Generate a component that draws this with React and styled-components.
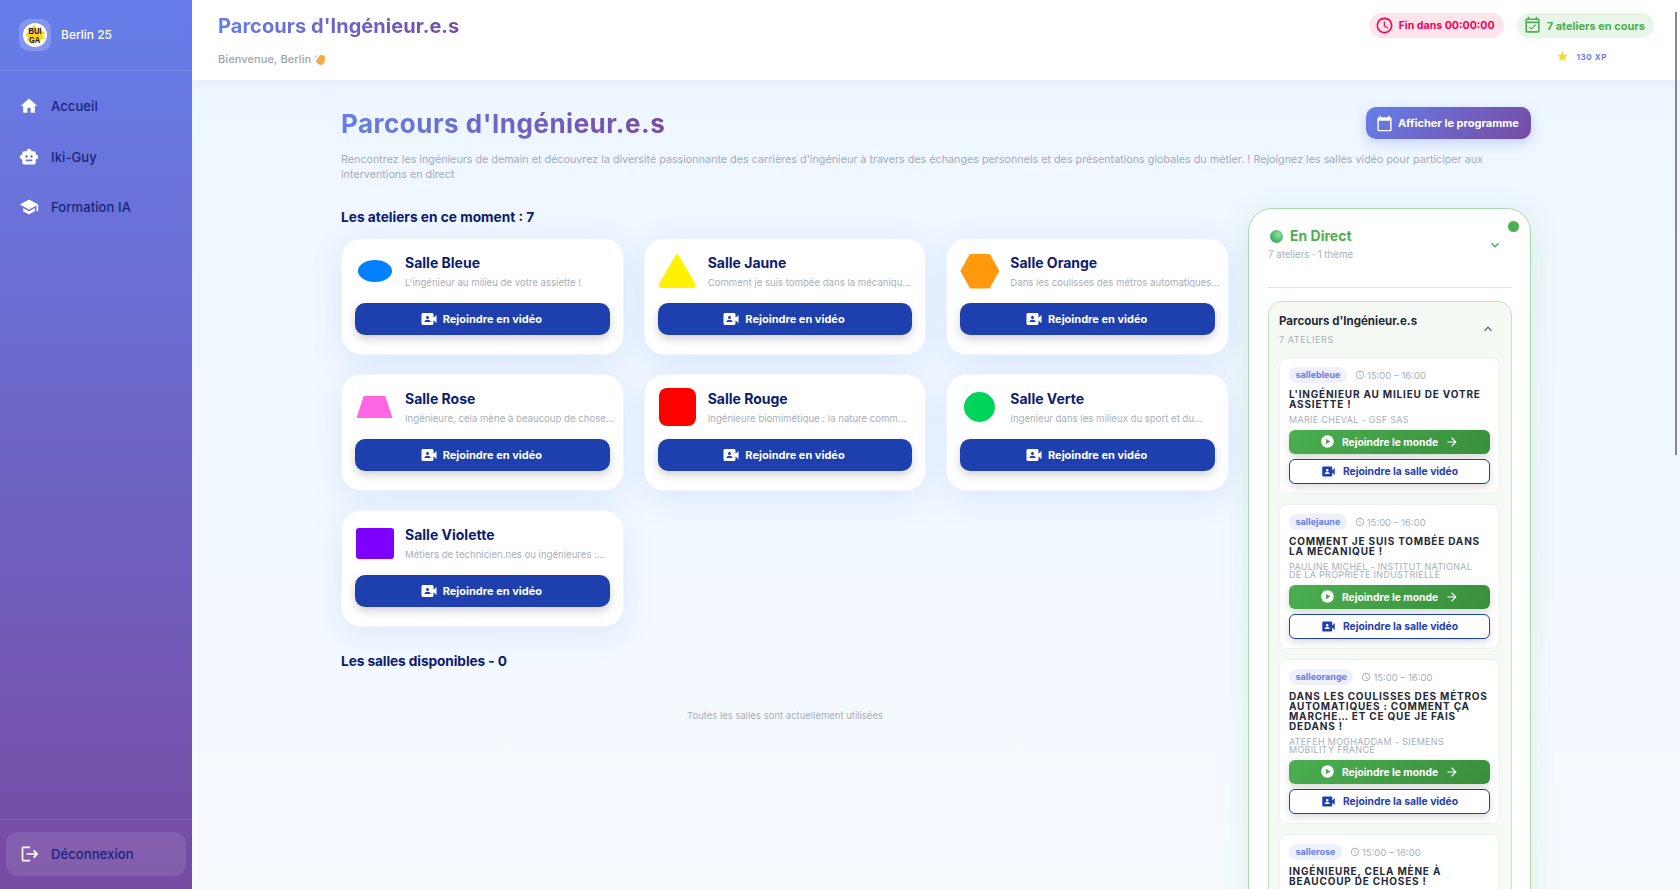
import styled, { createGlobalStyle } from 'styled-components';
import {
  MdHome,
  MdSmartToy,
  MdSchool,
  MdLogout,
  MdAccessTime,
  MdOutlineEventAvailable,
  MdStar,
  MdCalendarToday,
  MdVideoCameraFront,
  MdPlayCircle,
  MdArrowForward,
  MdExpandMore,
  MdExpandLess,
} from 'react-icons/md';

const GlobalStyle = createGlobalStyle`
  html, body {
    margin: 0;
    height: 100%;
    overflow: hidden;
  }
  body {
    font-family: Inter, "Liberation Sans", sans-serif;
    background: #f3f8ff;
  }
  * {
    box-sizing: border-box;
  }
`;

const ROOMS = [
  { name: 'Salle Bleue', desc: "L'ingénieur au milieu de votre assiette !", shape: { w: 34, h: 22, color: '#0080ff', radius: '50%' } },
  { name: 'Salle Jaune', desc: 'Comment je suis tombée dans la mécaniqu...', shape: { w: 37, h: 34, color: '#fff200', clip: 'polygon(50% 0, 54% 3%, 100% 90%, 97% 100%, 3% 100%, 0 90%, 46% 3%)' } },
  { name: 'Salle Orange', desc: 'Dans les coulisses des métros automatiques...', shape: { w: 39, h: 35, color: '#ff9a0e', clip: 'polygon(25% 0, 75% 0, 100% 50%, 75% 100%, 25% 100%, 0 50%)' } },
  { name: 'Salle Rose', desc: 'Ingénieure, cela mène à beaucoup de chose...', shape: { w: 36, h: 22, color: '#ff66e6', clip: 'polygon(20% 0, 80% 0, 100% 100%, 0 100%)' } },
  { name: 'Salle Rouge', desc: 'Ingénieure biomimétique : la nature comm...', shape: { w: 37, h: 38, color: '#ff0000', radius: '8px' } },
  { name: 'Salle Verte', desc: 'Ingenieur dans les milieux du sport et du...', shape: { w: 31, h: 30, color: '#00d45a', radius: '50%' } },
  { name: 'Salle Violette', desc: 'Métiers de technicien.nes ou ingénieures :...', shape: { w: 38, h: 31, color: '#8000ff', radius: '3px' } },
];

const SESSIONS = [
  { room: 'sallebleue', title: "L'ingénieur au milieu de votre assiette !", speaker: 'Marie Cheval - GSF SAS' },
  { room: 'sallejaune', title: 'Comment je suis tombée dans la mécanique !', speaker: 'Pauline Michel - Institut National de la Propriété Industrielle' },
  { room: 'salleorange', title: 'Dans les coulisses des métros automatiques : comment ça marche… et ce que je fais dedans !', speaker: 'Atefeh Moghaddam - Siemens Mobility France' },
  { room: 'sallerose', title: 'Ingénieure, cela mène à beaucoup de choses !', speaker: '' },
];

const Logo = () => (
  <LogoTile>
    <svg width="24" height="24" viewBox="0 0 24 24">
      <circle cx="12" cy="12" r="12" fill="#fff" />
      <polygon
        points="12,3 14,6 18,4 18,8 22,9 20,12 22,16 18,16 17,20 13,18 10,21 8,18 4,18 5,14 2,12 5,9 4,5 8,6 10,3"
        fill="#ffd21f"
      />
      <text x="12" y="11" textAnchor="middle" fontSize="9.5" fontWeight="800" fill="#14143c" fontFamily="Liberation Sans, sans-serif" textLength="13" lengthAdjust="spacingAndGlyphs">BUI</text>
      <text x="11.5" y="20" textAnchor="middle" fontSize="9.5" fontWeight="800" fill="#14143c" fontFamily="Liberation Sans, sans-serif" textLength="11" lengthAdjust="spacingAndGlyphs">GA</text>
    </svg>
  </LogoTile>
);

const WaveHand = () => (
  <svg width="12" height="13" viewBox="0 0 12 13">
    <path d="M2.6 7 L6 2 Q7 1.4 7.4 2.4 L8.2 1.8 Q9.2 1.6 9.4 2.6 L10.2 3 Q11 3.4 10.8 4.4 Q11.8 7 10 10 Q7.8 12.8 5 11.6 Q3.2 10.6 2.2 8.4 Q2 7.4 2.6 7 Z" fill="#f6a94a" />
    <path d="M1 4 L2.6 2.2 M0.6 6.6 L1.4 5.8" stroke="#7fa8e0" strokeWidth="0.9" fill="none" />
  </svg>
);

const Sidebar = () => (
  <Side>
    <Brand>
      <Logo />
      <BrandName>Berlin 25</BrandName>
    </Brand>
    <Nav>
      <NavItem><MdHome size={20} /><NavLabel>Accueil</NavLabel></NavItem>
      <NavItem><MdSmartToy size={20} /><NavLabel>Iki-Guy</NavLabel></NavItem>
      <NavItem><MdSchool size={20} /><NavLabel>Formation IA</NavLabel></NavItem>
    </Nav>
    <SideFooter>
      <LogoutButton><MdLogout size={20} /><NavLabel>Déconnexion</NavLabel></LogoutButton>
    </SideFooter>
  </Side>
);

const Header = () => (
  <Top>
    <div>
      <TopTitle>Parcours d'Ingénieur.e.s</TopTitle>
      <Welcome>Bienvenue, Berlin <WaveHand /></Welcome>
    </div>
    <TopRight>
      <Pills>
        <Pill $bg="#ffe4ec" $color="#f50057" $size={10.6}><MdAccessTime size={19} />Fin dans 00:00:00</Pill>
        <Pill $bg="#e8f5e9" $color="#4caf50" $size={11}><MdOutlineEventAvailable size={19} />7 ateliers en cours</Pill>
      </Pills>
      <Xp><MdStar size={13} color="#fdd835" /><XpText>130 XP</XpText></Xp>
    </TopRight>
  </Top>
);

const RoomCard = ({ room }) => (
  <Card>
    <CardHead>
      <ShapeBox>
        <Shape $w={room.shape.w} $h={room.shape.h} $color={room.shape.color} $radius={room.shape.radius} $clip={room.shape.clip} />
      </ShapeBox>
      <CardInfo>
        <CardTitle>{room.name}</CardTitle>
        <CardDesc>{room.desc}</CardDesc>
      </CardInfo>
    </CardHead>
    <JoinButton><MdVideoCameraFront size={18} />Rejoindre en vidéo</JoinButton>
  </Card>
);

const SessionCard = ({ session }) => (
  <Session>
    <SessionMeta>
      <RoomBadge>{session.room}</RoomBadge>
      <SessionTime><MdAccessTime size={10} />15:00 – 16:00</SessionTime>
    </SessionMeta>
    <SessionTitle>{session.title}</SessionTitle>
    {session.speaker && <Speaker>{session.speaker}</Speaker>}
    <WorldButton><MdPlayCircle size={15} /><span>Rejoindre le monde</span><MdArrowForward size={14} /></WorldButton>
    <VideoButton><MdVideoCameraFront size={15} />Rejoindre la salle vidéo</VideoButton>
  </Session>
);

const LivePanel = () => (
  <Panel>
    <StatusDot />
    <PanelHead>
      <div>
        <LiveRow><Sphere /><LiveTitle>En Direct</LiveTitle></LiveRow>
        <LiveSub>7 ateliers · 1 thème</LiveSub>
      </div>
      <MdExpandMore size={16} color="#4caf50" />
    </PanelHead>
    <Group>
      <GroupHead>
        <div>
          <GroupTitle>Parcours d'Ingénieur.e.s</GroupTitle>
          <GroupCount>7 ateliers</GroupCount>
        </div>
        <MdExpandLess size={16} color="#6b7280" />
      </GroupHead>
      <SessionList>
        {SESSIONS.map((s) => <SessionCard key={s.room} session={s} />)}
      </SessionList>
    </Group>
  </Panel>
);

const App = () => (
  <>
    <GlobalStyle />
    <Shell>
      <Sidebar />
      <Content>
        <Header />
        <Main>
          <Page>
            <TitleRow>
              <PageTitle>Parcours d'Ingénieur.e.s</PageTitle>
              <ProgramButton><MdCalendarToday size={17} />Afficher le programme</ProgramButton>
            </TitleRow>
            <Intro>
              Rencontrez les ingénieurs de demain et découvrez la diversité passionnante des carrières d'ingénieur à travers des échanges personnels et des présentations globales du métier. ! Rejoignez les salles vidéo pour participer aux interventions en direct
            </Intro>
            <Columns>
              <div>
                <SectionTitle>Les ateliers en ce moment : 7</SectionTitle>
                <RoomGrid>
                  {ROOMS.map((r) => <RoomCard key={r.name} room={r} />)}
                </RoomGrid>
                <SecondTitle>Les salles disponibles - 0</SecondTitle>
                <EmptyText>Toutes les salles sont actuellement utilisées</EmptyText>
              </div>
              <LivePanel />
            </Columns>
          </Page>
        </Main>
      </Content>
      <ScrollThumb />
    </Shell>
  </>
);

const Shell = styled.div`
  display: flex;
  position: relative;
  height: 889px;
  overflow: hidden;
`;

const ScrollThumb = styled.div`
  position: absolute;
  top: 12px;
  right: 3px;
  width: 2px;
  height: 443px;
  background: #888;
`;

const Side = styled.aside`
  flex: 0 0 192px;
  display: flex;
  flex-direction: column;
  background: linear-gradient(180deg, #667eea 0%, #764ba2 100%);
`;

const Brand = styled.div`
  display: flex;
  align-items: center;
  gap: 10px;
  height: 71px;
  padding: 0 19px;
  border-bottom: 1px solid rgba(255, 255, 255, 0.13);
`;

const LogoTile = styled.div`
  display: flex;
  align-items: center;
  justify-content: center;
  width: 32px;
  height: 32px;
  border-radius: 10px;
  background: rgba(255, 255, 255, 0.2);
`;

const BrandName = styled.span`
  margin-top: -1px;
  color: #fff;
  font-size: 12px;
  font-weight: 500;
`;

const Nav = styled.nav`
  display: flex;
  flex-direction: column;
  gap: 10.5px;
  flex: 1;
  padding-top: 15px;
`;

const NavItem = styled.div`
  display: flex;
  align-items: center;
  gap: 12px;
  height: 40px;
  padding: 0 19px;
  color: #fff;
`;

const NavLabel = styled.span`
  color: #1a237e;
  font-size: 13px;
  font-weight: 500;
  letter-spacing: 0.1px;
`;

const SideFooter = styled.div`
  height: 70px;
  padding: 12px 6px 0;
  border-top: 1px solid rgba(255, 255, 255, 0.13);
`;

const LogoutButton = styled.div`
  display: flex;
  align-items: center;
  gap: 11px;
  height: 44px;
  padding: 0 14px;
  color: #fff;
  border-radius: 12px;
  background: rgba(255, 255, 255, 0.1);
`;

const Content = styled.div`
  flex: 1;
  display: flex;
  flex-direction: column;
  min-width: 0;
`;

const Top = styled.header`
  flex: 0 0 80px;
  display: flex;
  justify-content: space-between;
  padding: 13px 26px 0 26px;
  background: #fff;
  box-shadow: 0 2px 10px rgba(102, 126, 234, 0.08);
  position: relative;
`;

const TopTitle = styled.div`
  font-size: 20px;
  font-weight: 700;
  line-height: 26px;
  letter-spacing: 0.05px;
  background: linear-gradient(90deg, #667eea, #764ba2);
  -webkit-background-clip: text;
  background-clip: text;
  color: transparent;
`;

const Welcome = styled.div`
  display: flex;
  align-items: center;
  gap: 3px;
  margin-top: 13px;
  color: #9ca3af;
  font-size: 11px;
  font-weight: 500;
  letter-spacing: 0.1px;
`;

const TopRight = styled.div`
  display: flex;
  flex-direction: column;
  align-items: flex-end;
`;

const Pills = styled.div`
  display: flex;
  gap: 13px;
`;

const Pill = styled.div`
  display: flex;
  align-items: center;
  gap: 5px;
  height: 25px;
  padding: 0 9px 0 6px;
  border-radius: 13px;
  background: ${(p) => p.$bg};
  color: ${(p) => p.$color};
  font-size: ${(p) => p.$size}px;
  font-weight: 700;
`;

const Xp = styled.div`
  display: flex;
  align-items: center;
  gap: 7px;
  margin: 12px 47px 0 0;
`;

const XpText = styled.span`
  color: #667eea;
  font-size: 8px;
  font-weight: 700;
  letter-spacing: 0.6px;
`;

const Main = styled.main`
  flex: 1;
  overflow: hidden;
  background: linear-gradient(180deg, #eef6ff 0%, #f6faff 100%);
`;

const Page = styled.div`
  width: 1190px;
  margin: 0 auto;
  padding-top: 27px;
`;

const TitleRow = styled.div`
  display: flex;
  justify-content: space-between;
  align-items: center;
`;

const PageTitle = styled.h1`
  margin: 0;
  font-size: 26px;
  font-weight: 700;
  letter-spacing: 0.5px;
  background: linear-gradient(90deg, #667eea, #764ba2);
  -webkit-background-clip: text;
  background-clip: text;
  color: transparent;
`;

const ProgramButton = styled.div`
  display: flex;
  align-items: center;
  gap: 5px;
  width: 165px;
  height: 32px;
  padding: 0 10px;
  border-radius: 10px;
  background: linear-gradient(135deg, #667eea, #764ba2);
  box-shadow: 0 4px 12px rgba(102, 126, 234, 0.3);
  color: #fff;
  font-size: 11px;
  font-weight: 700;
  white-space: nowrap;
`;

const Intro = styled.p`
  margin: 13px 0 0;
  color: #a5acb8;
  font-size: 10.75px;
  line-height: 15px;
`;

const Columns = styled.div`
  display: grid;
  grid-template-columns: 888px 283px;
  column-gap: 19px;
  margin-top: 26px;
`;

const SectionTitle = styled.h2`
  margin: 0;
  color: #0d1b6e;
  font-size: 13.7px;
  font-weight: 700;
  line-height: 18px;
`;

const SecondTitle = styled(SectionTitle)`
  margin-top: 25px;
  letter-spacing: -0.1px;
`;

const RoomGrid = styled.div`
  display: grid;
  grid-template-columns: repeat(3, minmax(0, 1fr));
  gap: 19px 20px;
  margin-top: 12px;
`;

const Card = styled.div`
  height: 117px;
  padding: 15px 13px 13px;
  border: 1px solid #f0f5ff;
  border-radius: 20px;
  background: #fff;
  box-shadow: 0 8px 32px rgba(59, 130, 246, 0.13);
`;

const CardHead = styled.div`
  display: flex;
  gap: 11px;
  height: 49px;
`;

const ShapeBox = styled.div`
  flex: 0 0 39px;
  display: flex;
  align-items: center;
  justify-content: center;
  height: 34px;
`;

const Shape = styled.div`
  flex: none;
  width: ${(p) => p.$w}px;
  height: ${(p) => p.$h}px;
  background: ${(p) => p.$color};
  border-radius: ${(p) => p.$radius || 0};
  clip-path: ${(p) => p.$clip || 'none'};
`;

const CardInfo = styled.div`
  min-width: 0;
`;

const CardTitle = styled.div`
  color: #0d1b6e;
  font-size: 14px;
  font-weight: 700;
  line-height: 18px;
`;

const CardDesc = styled.div`
  margin-top: 3px;
  color: #a8afba;
  font-size: 9.6px;
  line-height: 16px;
  white-space: nowrap;
`;

const JoinButton = styled.div`
  display: flex;
  align-items: center;
  justify-content: center;
  gap: 5px;
  height: 32px;
  padding-right: 3px;
  border-radius: 10px;
  background: #1e40af;
  box-shadow: 0 4px 10px rgba(0, 0, 0, 0.18);
  color: #fff;
  font-size: 11px;
  font-weight: 700;
`;

const EmptyText = styled.div`
  margin-top: 39px;
  color: #a8afba;
  font-size: 9.5px;
  line-height: 14px;
  text-align: center;
`;

const Panel = styled.aside`
  position: relative;
  padding: 18px 18px 0 19px;
  border: 1.5px solid #a8dcaa;
  border-radius: 24px;
  background: #fff;
  box-shadow: 0 8px 32px rgba(76, 175, 80, 0.14);
`;

const StatusDot = styled.span`
  position: absolute;
  top: 12px;
  right: 11px;
  width: 11px;
  height: 11px;
  border-radius: 50%;
  background: #4caf50;
`;

const PanelHead = styled.div`
  display: flex;
  justify-content: space-between;
  align-items: flex-start;
  height: 61px;
  border-bottom: 1px solid #e0e0e0;
  svg {
    margin: 10px 9px 0 0;
  }
`;

const LiveRow = styled.div`
  display: flex;
  align-items: center;
  gap: 7px;
  margin-left: 2px;
`;

const Sphere = styled.span`
  width: 13px;
  height: 13px;
  border-radius: 50%;
  background: radial-gradient(circle at 65% 35%, #8ee08f, #3fae6b 70%, #4b9a90);
`;

const LiveTitle = styled.span`
  color: #4caf50;
  font-size: 14px;
  font-weight: 700;
  line-height: 18px;
`;

const LiveSub = styled.div`
  margin-top: 2.5px;
  color: #a8afba;
  font-size: 9.7px;
  line-height: 14px;
`;

const Group = styled.div`
  margin-top: 13px;
  padding: 10px 11px 0 10px;
  border: 1px solid #c0e4c2;
  border-radius: 14px;
  background: #f5faf5;
`;

const GroupHead = styled.div`
  display: flex;
  justify-content: space-between;
  align-items: center;
  svg {
    margin: 0 4px 0 0;
  }
`;

const GroupTitle = styled.div`
  color: #1f2937;
  font-size: 11.5px;
  font-weight: 700;
  line-height: 18px;
`;

const GroupCount = styled.div`
  margin-top: 3.5px;
  color: #a8afba;
  font-size: 9px;
  line-height: 12px;
  letter-spacing: 0.6px;
  text-transform: uppercase;
`;

const SessionList = styled.div`
  display: flex;
  flex-direction: column;
  gap: 10.5px;
  margin-top: 11.5px;
`;

const Session = styled.div`
  padding: 9px;
  border: 1px solid #eef0f2;
  border-radius: 8px;
  background: #fff;
`;

const SessionMeta = styled.div`
  display: flex;
  align-items: center;
  gap: 8px;
`;

const RoomBadge = styled.span`
  padding: 0 6.5px;
  height: 16px;
  border-radius: 8px;
  background: #eef0fd;
  color: #667eea;
  font-size: 9px;
  font-weight: 700;
  line-height: 16px;
`;

const SessionTime = styled.span`
  display: flex;
  align-items: center;
  gap: 2px;
  color: #a8afba;
  font-size: 9.5px;
`;

const SessionTitle = styled.div`
  margin-top: 6px;
  color: #1f2937;
  font-size: 10px;
  font-weight: 700;
  line-height: 10px;
  letter-spacing: 0.8px;
  text-transform: uppercase;
`;

const Speaker = styled.div`
  margin-top: 7px;
  padding-right: 8px;
  color: #a8afba;
  font-size: 9px;
  line-height: 8px;
  letter-spacing: 0.3px;
  text-transform: uppercase;
`;

const WorldButton = styled.div`
  display: flex;
  align-items: center;
  justify-content: center;
  gap: 7px;
  height: 24px;
  margin-top: 5.5px;
  border-radius: 6px;
  background: linear-gradient(135deg, #4caf50, #388e3c);
  box-shadow: 0 3px 8px rgba(0, 0, 0, 0.15);
  color: #fff;
  font-size: 10.3px;
  font-weight: 700;
`;

const VideoButton = styled.div`
  display: flex;
  align-items: center;
  justify-content: center;
  gap: 7px;
  height: 25px;
  margin-top: 5px;
  border: 1px solid #1e40af;
  border-radius: 6px;
  background: #fff;
  box-shadow: 0 3px 8px rgba(0, 0, 0, 0.15);
  color: #1e40af;
  font-size: 10.3px;
  font-weight: 700;
`;

export default App;
